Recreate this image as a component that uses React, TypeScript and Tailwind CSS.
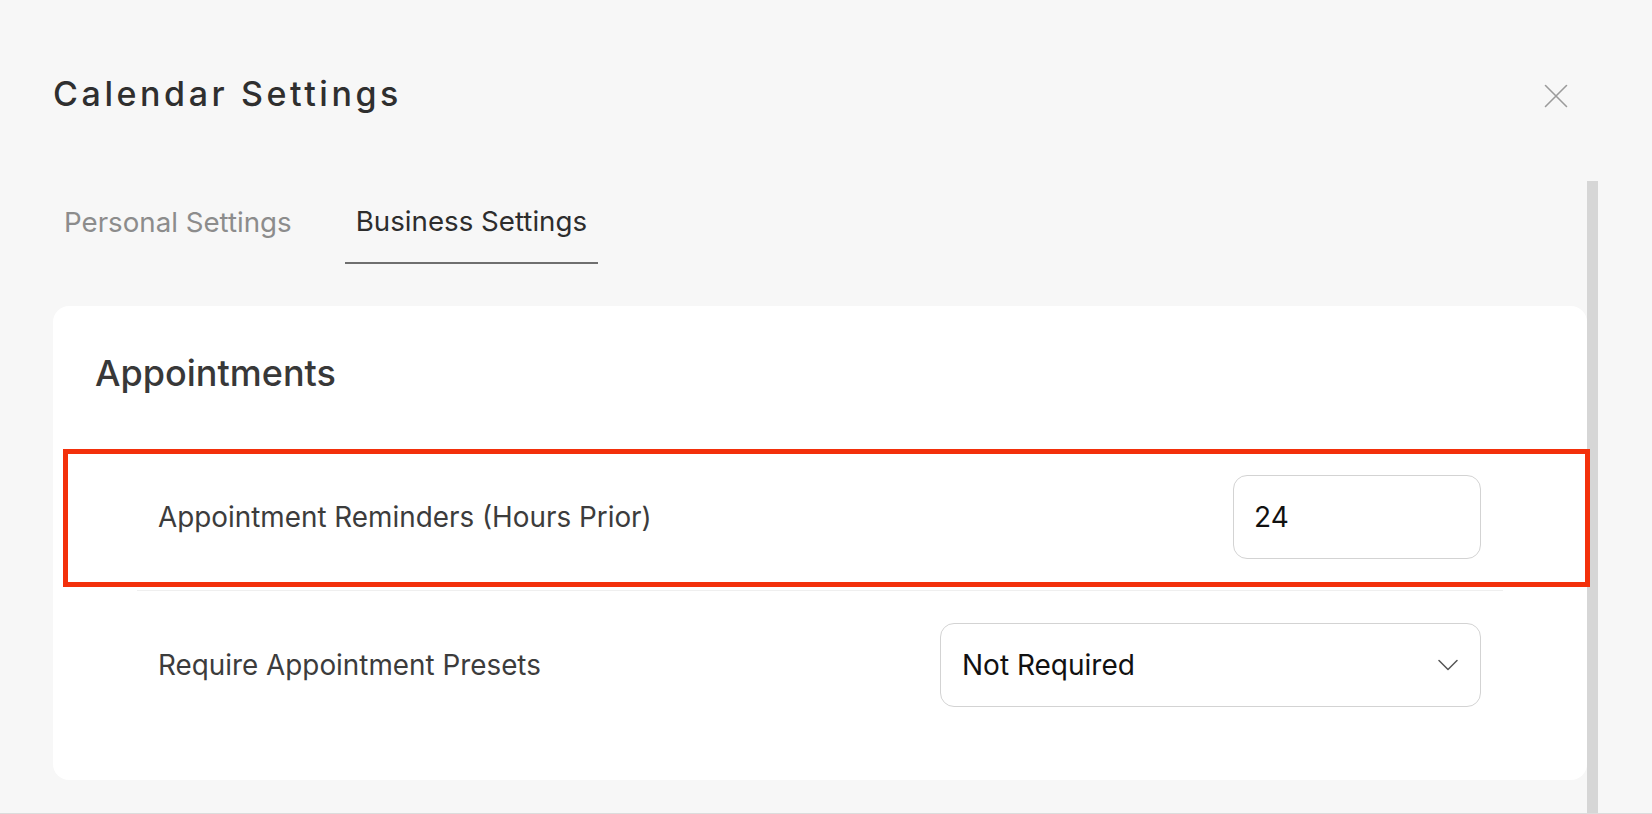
import React from "react";

function CloseIcon() {
  return (
    <svg width="24" height="24" viewBox="0 0 24 24" fill="none">
      <path d="M1.5 1.5 L22.5 22.5 M22.5 1.5 L1.5 22.5" stroke="#9b9b9b" strokeWidth="1.6" strokeLinecap="round" />
    </svg>
  );
}

function Chevron() {
  return (
    <svg width="20" height="12" viewBox="0 0 20 12" fill="none">
      <path d="M1 1.5 L10 10.5 L19 1.5" stroke="#555555" strokeWidth="1.5" strokeLinecap="round" strokeLinejoin="round" />
    </svg>
  );
}

export default function App() {
  const font = { fontFamily: "Inter, 'Noto Sans', sans-serif" };
  return (
    <div
      className="relative flex h-[814px] w-full flex-col overflow-hidden border-b border-[#dcdcdc] bg-[#f7f7f7]"
      style={font}
    >
      {/* Header */}
      <div className="flex items-start justify-between pl-[53px] pr-[84px] pt-[74px]">
        <h1 className="text-[34px] font-medium leading-[40px] tracking-[0.105em] text-[#2f2f2f]">
          Calendar Settings
        </h1>
        <button className="mt-[10px] flex h-[24px] w-[24px] items-center justify-center">
          <CloseIcon />
        </button>
      </div>

      {/* Body */}
      <div className="mt-[67px] flex flex-1 pl-[53px]">
        <div className="flex w-[1534px] flex-col pt-[23px]">
          {/* Tabs */}
          <div className="flex gap-[42px]">
            <button className="px-[11px] pb-[24px] text-[27.7px] leading-[34px] text-[#8c8c8c]">
              Personal Settings
            </button>
            <button className="border-b-2 border-[#6f6f6f] px-[11px] pb-[24px] text-[27.7px] leading-[34px] text-[#2d2d2d]">
              Business Settings
            </button>
          </div>

          {/* Card */}
          <div className="mt-[42px] flex flex-col rounded-[16px] bg-white pb-[41px] pt-[45px]">
            <h2 className="px-[42px] text-[36px] font-medium leading-[44px] text-[#383838]">
              Appointments
            </h2>
            <div className="mt-[49px] flex flex-col">
              <div className="mx-[84px] flex items-center justify-between border-b border-[#efefef] py-[31px] pl-[21px] pr-[22px]">
                <span className="text-[27.85px] leading-[34px] text-[#3c3c3c]">
                  Appointment Reminders (Hours Prior)
                </span>
                <div className="flex h-[84px] w-[248px] items-center rounded-[14px] border-[1.5px] border-[#d3d3d3] bg-white pl-[20px]">
                  <span className="text-[28px] leading-[34px] text-[#111111]">24</span>
                </div>
              </div>
              <div className="mx-[84px] flex items-center justify-between py-[32px] pl-[21px] pr-[22px]">
                <span className="text-[27.85px] leading-[34px] text-[#3c3c3c]">
                  Require Appointment Presets
                </span>
                <div className="flex h-[84px] w-[541px] items-center justify-between rounded-[14px] border-[1.5px] border-[#d3d3d3] bg-white pl-[21px] pr-[22px]">
                  <span className="text-[28px] leading-[34px] text-[#111111]">Not Required</span>
                  <Chevron />
                </div>
              </div>
            </div>
          </div>
        </div>
        {/* Scrollbar */}
        <div className="w-[11px] self-stretch bg-[#d6d6d6]" />
      </div>

      {/* Highlight annotation */}
      <div className="pointer-events-none absolute left-[63px] top-[449px] h-[138px] w-[1527px] border-[5px] border-[#f3300b]" />
    </div>
  );
}
